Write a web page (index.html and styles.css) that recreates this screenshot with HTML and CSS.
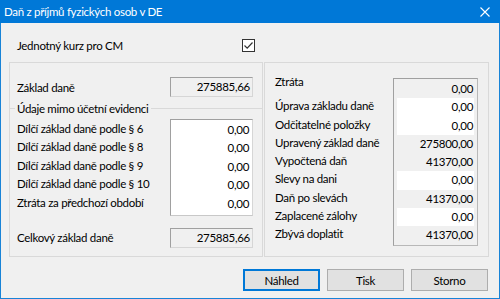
FILE: index.html
```html
<!DOCTYPE html>
<html>
<head>
  <meta charset="utf-8">
  <link rel="stylesheet" href="styles.css">
</head>
<body>
  <div class="window">
    <div class="titlebar">
      <span class="title">Daň z příjmů fyzických osob v DE</span>
      <svg class="close" width="10" height="10" viewBox="0 0 10 10">
        <path d="M0.5 0.5 L9.5 9.5 M9.5 0.5 L0.5 9.5" stroke="#fff" stroke-width="1.1"/>
      </svg>
    </div>

    <div class="content">
      <div class="kurz-row">
        <span class="kurz-label">Jednotný kurz pro CM</span>
        <span class="checkbox">
          <svg width="11" height="11" viewBox="0 0 11 11">
            <path d="M1.5 5.5 L4.2 8.2 L9.5 2.5" fill="none" stroke="#333" stroke-width="1.2"/>
          </svg>
        </span>
      </div>

      <div class="panels">
        <div class="panel left-panel">
          <div class="lp-row base-row">
            <span>Základ daně</span>
            <div class="field readonly">275885,66</div>
          </div>

          <div class="group-title"><span>Údaje mimo účetní evidenci</span></div>

          <div class="lp-row sub">
            <div class="sub-labels">
              <span>Dílčí základ daně podle § 6</span>
              <span>Dílčí základ daně podle § 8</span>
              <span>Dílčí základ daně podle § 9</span>
              <span>Dílčí základ daně podle § 10</span>
              <span>Ztráta za předchozí období</span>
            </div>
            <div class="sub-box">
              <span>0,00</span>
              <span>0,00</span>
              <span>0,00</span>
              <span>0,00</span>
              <span>0,00</span>
            </div>
          </div>

          <div class="lp-row total-row">
            <span>Celkový základ daně</span>
            <div class="field readonly">275885,66</div>
          </div>
        </div>

        <div class="panel right-panel">
          <div class="rp-labels">
            <span class="first">Ztráta</span>
            <span>Úprava základu daně</span>
            <span>Odčitatelné položky</span>
            <span>Upravený základ daně</span>
            <span>Vypočtená daň</span>
            <span>Slevy na dani</span>
            <span>Daň po slevách</span>
            <span>Zaplacené zálohy</span>
            <span>Zbývá doplatit</span>
          </div>
          <div class="rp-box">
            <span class="val">0,00</span>
            <span class="val edit">0,00</span>
            <span class="val edit">0,00</span>
            <span class="val">275800,00</span>
            <span class="val">41370,00</span>
            <span class="val edit">0,00</span>
            <span class="val">41370,00</span>
            <span class="val edit">0,00</span>
            <span class="val">41370,00</span>
          </div>
        </div>
      </div>

      <div class="buttons">
        <button class="btn default">Náhled</button>
        <button class="btn">Tisk</button>
        <button class="btn">Storno</button>
      </div>
    </div>
  </div>
</body>
</html>
```

FILE: styles.css
```css
body {
  margin: 0;
  font-family: Lato, "Noto Sans", sans-serif;
  font-size: 11.5px;
  letter-spacing: -0.3px;
  color: #000;
}
.window {
  width: 500px;
  height: 299px;
  box-sizing: border-box;
  border: 1px solid #1883d7;
  border-top: none;
  background: #f0f0f0;
  display: flex;
  flex-direction: column;
  white-space: nowrap;
}
.titlebar {
  height: 23px;
  margin: 0 -1px;
  padding: 0 10px 0 4px;
  background: #0078d7;
  color: #fff;
  display: flex;
  align-items: center;
  justify-content: space-between;
}
.content {
  padding: 0 10px 0 8px;
}
.kurz-row {
  display: flex;
  align-items: center;
  height: 22px;
  margin-top: 11px;
  padding-left: 8px;
}
.kurz-label {
  width: 225px;
}
.checkbox {
  width: 11px;
  height: 11px;
  border: 1px solid #333;
  background: #fff;
  display: flex;
}
.panels {
  display: flex;
  gap: 1px;
  height: 195px;
  margin-top: 6px;
}
.panel {
  box-sizing: border-box;
  border: 1px solid #d9d9d9;
  height: 100%;
}
.left-panel {
  width: 254px;
}
.right-panel {
  width: 225px;
  display: flex;
  justify-content: space-between;
  padding: 15px 10px 0 10px;
}
.lp-row {
  display: flex;
  justify-content: space-between;
  align-items: center;
  padding: 0 9px 0 7px;
}
.field {
  box-sizing: border-box;
  width: 83px;
  height: 20px;
  line-height: 18px;
  text-align: right;
  padding-right: 2px;
  border: 1px solid;
  border-color: #a0a0a0 #d6d6d6 #d6d6d6 #a0a0a0;
}
.readonly {
  background: #f0f0f0;
}
.base-row {
  margin-top: 14px;
}
.group-title {
  display: flex;
  align-items: center;
  margin-top: 4px;
  height: 14px;
}
.group-title::before,
.group-title::after {
  content: "";
  border-top: 1px solid #d9d9d9;
}
.group-title::before {
  width: 5px;
  margin-right: 2px;
}
.group-title::after {
  flex: 1;
  margin-left: 3px;
}
.sub {
  align-items: flex-start;
  margin-top: 4px;
}
.sub-labels {
  display: flex;
  flex-direction: column;
  padding-top: 1px;
}
.sub-labels span,
.sub-box span {
  height: 18.4px;
  line-height: 18px;
}
.sub-box {
  box-sizing: border-box;
  width: 83px;
  display: flex;
  flex-direction: column;
  text-align: right;
  background: #fff;
  padding: 1px 3px 2px 0;
  border: 1px solid;
  border-color: #a0a0a0 #d6d6d6 #c8c8c8 #a0a0a0;
}
.total-row {
  margin-top: 12px;
}
.rp-labels {
  display: flex;
  flex-direction: column;
  padding-top: 1px;
}
.rp-labels span,
.rp-box .val {
  height: 18.3px;
  line-height: 18px;
}
.rp-labels .first {
  margin-top: -6px;
  margin-bottom: 6px;
}
.rp-box {
  box-sizing: border-box;
  width: 85px;
  height: 168px;
  display: flex;
  flex-direction: column;
  padding: 1px 3px 0 3px;
  border: 1px solid;
  border-color: #a0a0a0 #b8b8b8 #b8b8b8 #a0a0a0;
}
.val {
  text-align: right;
  padding-right: 1px;
}
.val.edit {
  background: #fff;
}
.buttons {
  display: flex;
  justify-content: flex-end;
  gap: 7px;
  margin-top: 12px;
  padding-right: 1px;
}
.btn {
  box-sizing: border-box;
  width: 77px;
  height: 22px;
  font-family: inherit;
  font-size: 11.5px;
  letter-spacing: -0.3px;
  color: #000;
  background: #e1e1e1;
  border: 1px solid #adadad;
  padding: 0;
}
.btn.default {
  border: 2px solid #0078d7;
}
```
